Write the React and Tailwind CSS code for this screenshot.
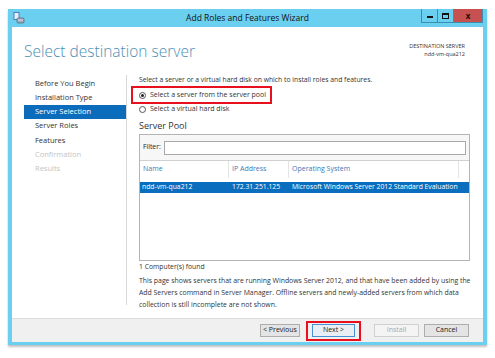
import React from 'react';

const navItems = [
    { label: 'Before You Begin', state: 'done' },
    { label: 'Installation Type', state: 'done' },
    { label: 'Server Selection', state: 'active' },
    { label: 'Server Roles', state: 'todo' },
    { label: 'Features', state: 'todo' },
    { label: 'Confirmation', state: 'off' },
    { label: 'Results', state: 'off' },
];

const infoLines = [
    'This page shows servers that are running Windows Server 2012, and that have been added by using the',
    'Add Servers command in Server Manager. Offline servers and newly-added servers from which data',
    'collection is still incomplete are not shown.',
];

function Radio({ checked }) {
    return (
        <span className="w-[7px] h-[7px] rounded-full border border-[#555] bg-white flex items-center justify-center shrink-0">
            {checked && <span className="w-[3px] h-[3px] rounded-full bg-[#222]" />}
        </span>
    );
}

function WinButton({ children, disabled, focused }) {
    return (
        <div
            className={`h-[13px] flex items-center justify-center text-[7px] border ${
                disabled ? 'border-[#d0d0d0] text-[#a8a8a8] bg-[#f4f4f4]' : focused ? 'border-[#4a90d0] bg-[#e8eef4] text-[#222]' : 'border-[#adadad] bg-[#e4e4e4] text-[#222]'
            }`}
        >
            {children}
        </div>
    );
}

export default function App() {
    return (
        <div className="w-[495px] h-[358px] bg-white overflow-hidden pt-[9px] pl-[8px]" style={{ fontFamily: '"Open Sans", "Noto Sans", sans-serif' }}>
            <div className="w-[479px] h-[336px] bg-[#6bcfef] flex flex-col shadow-[0_2px_2px_rgba(0,0,0,0.25)]">
                {/* title bar */}
                <div className="h-[18px] relative flex items-center justify-center shrink-0">
                    <svg className="absolute left-[5px] top-[3px]" width="12" height="12" viewBox="0 0 12 12">
                        <rect x="1" y="0.5" width="5" height="7" fill="#e8f0ff" stroke="#3a6ab0" strokeWidth="0.8" />
                        <rect x="4" y="6" width="7" height="5" rx="1" fill="#9aa8b8" stroke="#556" strokeWidth="0.6" />
                        <rect x="5" y="7.5" width="5" height="1" fill="#dde" />
                    </svg>
                    <span className="text-[8.5px] text-[#111]">Add Roles and Features Wizard</span>
                    <div className="absolute right-[4px] top-0 flex h-[14px] border border-t-0 border-[#3a8fb0]">
                        <div className="w-[16px] flex items-end justify-center pb-[4px] border-r border-[#3a8fb0]">
                            <span className="w-[6px] h-[2px] bg-[#111]" />
                        </div>
                        <div className="w-[16px] flex items-center justify-center border-r border-[#3a8fb0]">
                            <span className="w-[7px] h-[6px] border border-t-2 border-[#111]" />
                        </div>
                        <div className="w-[28px] bg-[#c75050] flex items-center justify-center text-[8px] font-bold text-[#111] leading-none">x</div>
                    </div>
                </div>

                {/* client area */}
                <div className="flex-1 mx-[4px] mb-[3px] bg-white flex flex-col">
                    <div className="flex-1 flex flex-col">
                        {/* header */}
                        <div className="h-[48px] flex justify-between items-start pl-[12px] pr-[18px] shrink-0">
                            <div className="text-[15.5px] font-light text-[#4d8fb3] mt-[17px] leading-none">Select destination server</div>
                            <div className="mt-[15px] text-right text-[5.5px] text-[#333] leading-[8px]">
                                <div>DESTINATION SERVER</div>
                                <div>ndd-vm-qua212</div>
                            </div>
                        </div>

                        <div className="flex flex-1">
                            {/* nav */}
                            <div className="w-[115px] shrink-0 pl-[12px] pt-[1px] mb-[13px] border-r border-[#d8d8d8]">
                                {navItems.map((item) => (
                                    <div
                                        key={item.label}
                                        className={`h-[14.3px] flex items-center pl-[11px] text-[7.5px] ${
                                            item.state === 'active' ? 'bg-[#0b6cbc] text-white' : item.state === 'off' ? 'text-[#c4c4c4]' : 'text-[#333]'
                                        }`}
                                    >
                                        {item.label}
                                    </div>
                                ))}
                            </div>

                            {/* main */}
                            <div className="flex-1 pl-[12px] pr-[14px] text-[#333]">
                                <div className="text-[6.8px] leading-[10px] whitespace-nowrap">Select a server or a virtual hard disk on which to install roles and features.</div>
                                <div className="mt-[1px] -ml-[8px] w-[141px] h-[18px] border-2 border-[#e8101e] flex items-center gap-[4px] pl-[6px]">
                                    <Radio checked />
                                    <span className="text-[7px] whitespace-nowrap">Select a server from the server pool</span>
                                </div>
                                <div className="flex items-center gap-[4px] mt-[0px] h-[11px]">
                                    <Radio />
                                    <span className="text-[7px] whitespace-nowrap">Select a virtual hard disk</span>
                                </div>
                                <div className="text-[9px] mt-[5px] leading-[12px]">Server Pool</div>
                                <div className="mt-[2px] h-[127px] border border-[#b4b4b4] flex flex-col">
                                    <div className="h-[26px] border-b border-[#d0d0d0] bg-[#f7f7f7] flex items-center px-[3px] gap-[3px] shrink-0">
                                        <span className="text-[6.8px] text-[#222]">Filter:</span>
                                        <div className="flex-1 h-[14px] border border-[#a8a8a8] bg-white" />
                                    </div>
                                    <div className="h-[17px] flex items-center text-[7px] text-[#3b79b8] shrink-0">
                                        <div className="w-[89px] pl-[3px] h-full flex items-center border-r border-[#e4e4e4]">Name</div>
                                        <div className="w-[60px] pl-[3px] h-full flex items-center border-r border-[#e4e4e4]">IP Address</div>
                                        <div className="w-[170px] pl-[3px] h-full flex items-center border-r border-[#e4e4e4]">Operating System</div>
                                    </div>
                                    <div className="mt-[4px] h-[11px] bg-[#0a6dbd] text-white text-[6.8px] flex items-center whitespace-nowrap">
                                        <div className="w-[89px] pl-[2px]">ndd-vm-qua212</div>
                                        <div className="w-[60px] pl-[3px]">172.31.251.125</div>
                                        <div className="flex-1 pl-[3px]">Microsoft Windows Server 2012 Standard Evaluation</div>
                                    </div>
                                </div>
                                <div className="text-[6.8px] mt-[1px] leading-[10px]">1 Computer(s) found</div>
                                <div className="text-[6.9px] mt-[3px] leading-[12px]">
                                    {infoLines.map((line) => (
                                        <div key={line} className="whitespace-nowrap">{line}</div>
                                    ))}
                                </div>
                            </div>
                        </div>
                    </div>

                    {/* footer */}
                    <div className="h-[24px] bg-[#f0f0f0] border-t border-[#dcdcdc] flex items-center justify-end pr-[14px] shrink-0">
                        <div className="w-[40px] mr-[6px]"><WinButton>&lt; Previous</WinButton></div>
                        <div className="w-[55px] h-[20px] border-2 border-[#e8101e] flex items-center justify-center mr-[13px]">
                            <div className="w-[43px]"><WinButton focused>Next &gt;</WinButton></div>
                        </div>
                        <div className="w-[45px] mr-[5px]"><WinButton disabled>Install</WinButton></div>
                        <div className="w-[45px]"><WinButton>Cancel</WinButton></div>
                    </div>
                </div>
            </div>
        </div>
    );
}
